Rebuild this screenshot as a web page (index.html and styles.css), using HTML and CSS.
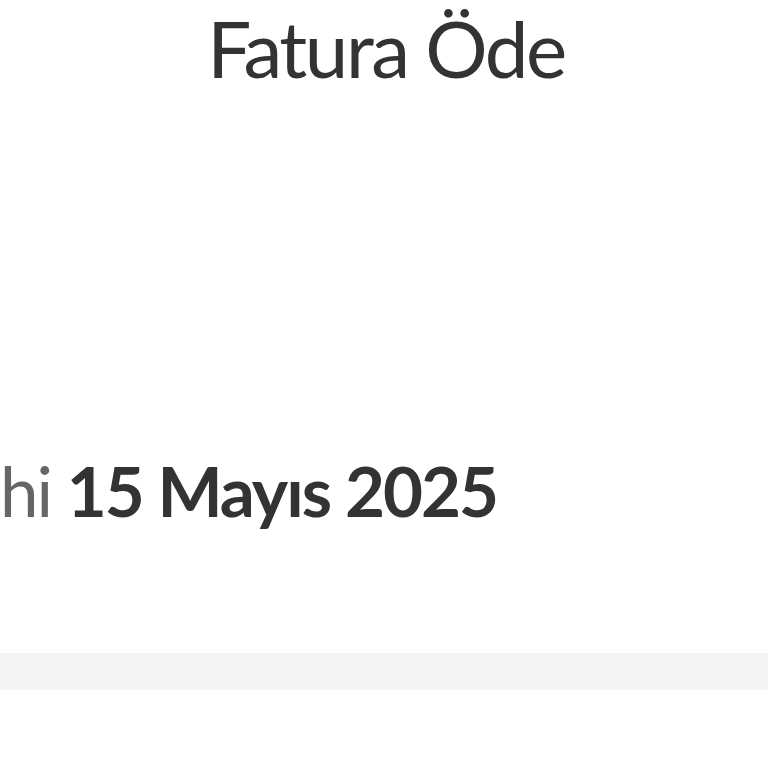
FILE: index.html
```html
<!DOCTYPE html>
<html lang="tr">
<head>
<meta charset="utf-8">
<title>Fatura Öde</title>
<link rel="stylesheet" href="styles.css">
</head>
<body>
<div class="page">
  <header class="title">Fatura Öde</header>
  <div class="due-row"><span class="due-label">hi</span> <span class="due-date">15 Mayıs 2025</span></div>
  <div class="divider"></div>
</div>
</body>
</html>
```
FILE: styles.css
```css
html, body {
  margin: 0;
  padding: 0;
  background: #ffffff;
}
.page {
  width: 768px;
  height: 768px;
  overflow: hidden;
  font-family: Lato, "Open Sans", sans-serif;
  display: flex;
  flex-direction: column;
}
.title {
  height: 96px;
  line-height: 96px;
  font-size: 78px;
  font-weight: 400;
  letter-spacing: -2.4px;
  color: #333333;
  text-align: center;
  padding-left: 4px;
}
.due-row {
  margin-top: 353px;
  height: 84px;
  line-height: 84px;
  font-size: 69px;
  letter-spacing: -2px;
  white-space: nowrap;
  padding-left: 0;
}
.due-label {
  color: #666666;
  font-weight: 400;
}
.due-date {
  color: #333333;
  font-weight: 700;
}
.divider {
  margin-top: 120px;
  height: 37px;
  background: #f4f4f4;
}
```
